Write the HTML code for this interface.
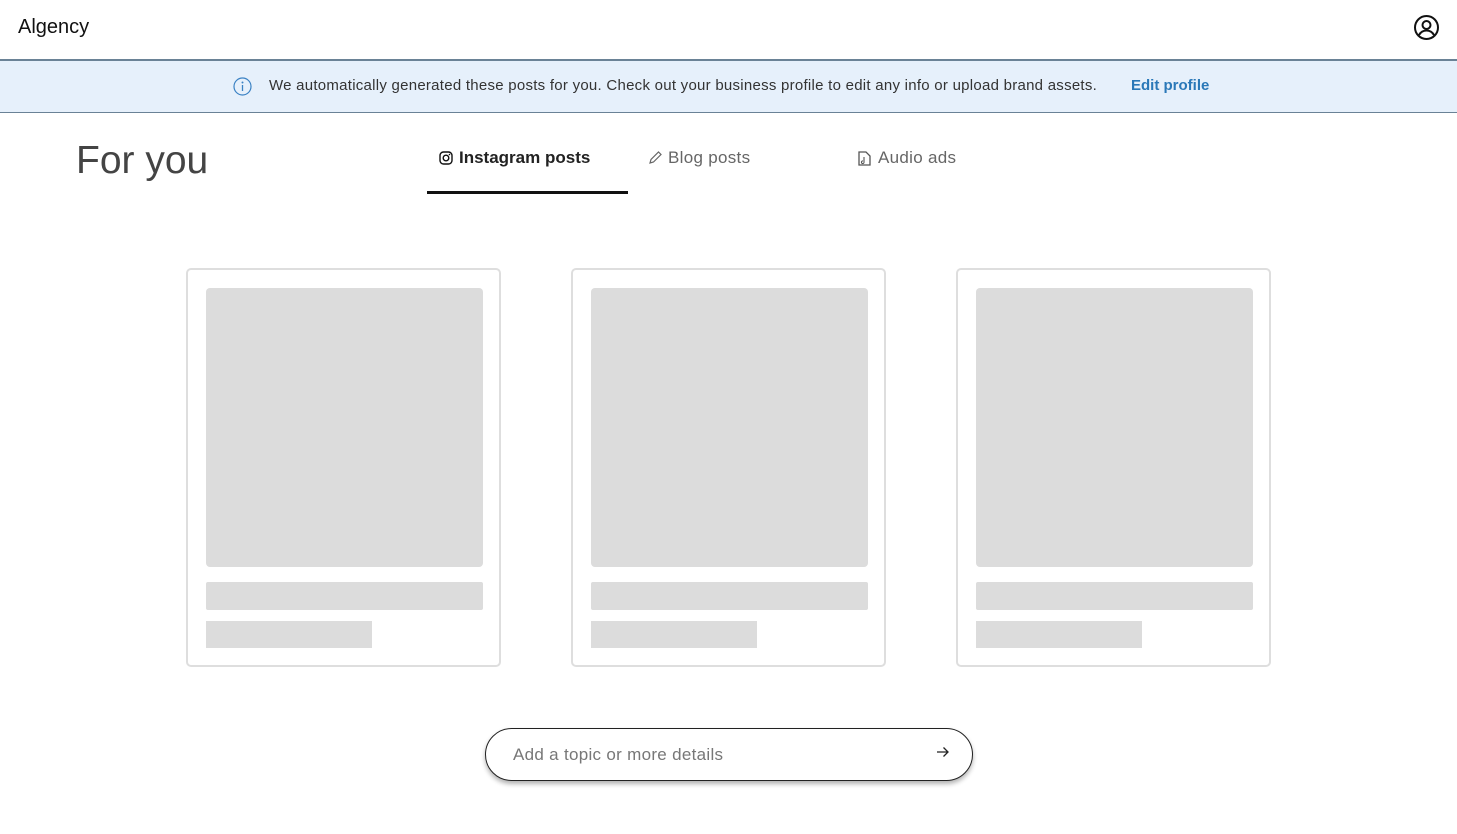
<!DOCTYPE html>
<html><head><meta charset="utf-8"><style>
*{box-sizing:border-box;margin:0;padding:0}
body{width:1457px;height:834px;background:#fff;font-family:"Liberation Sans",sans-serif;position:relative;overflow:hidden;color:#222}
.abs{position:absolute}
.card{position:absolute;top:268px;width:315px;height:399px;border:2px solid #dedede;border-radius:5px;background:#fff}
.img{position:absolute;left:18px;top:18px;width:277px;height:279px;background:#dcdcdc;border-radius:4px}
.b1{position:absolute;left:18px;top:312px;width:277px;height:28px;background:#dcdcdc;border-radius:2px}
.b2{position:absolute;left:18px;top:351px;width:166px;height:27px;background:#dcdcdc}
</style></head><body>
<div class="abs" style="left:18px;top:16px;font-size:20px;color:#111">Algency</div>
<svg class="abs" style="left:1413px;top:14px" width="27" height="27" viewBox="0 0 27 27"><circle cx="13.5" cy="13.5" r="11.5" fill="none" stroke="#111" stroke-width="2"/><circle cx="13.5" cy="11" r="4" fill="none" stroke="#111" stroke-width="2"/><path d="M6 21c2-3.5 4.5-4.5 7.5-4.5s5.5 1 7.5 4.5" fill="none" stroke="#111" stroke-width="2"/></svg>
<div class="abs" style="left:0;top:59px;width:1457px;height:54px;background:#e6f0fb;border-top:2px solid #6a8296;border-bottom:1px solid #6a8296"></div>
<svg class="abs" style="left:233px;top:77px" width="19" height="19" viewBox="0 0 19 19"><circle cx="9.5" cy="9.5" r="8.5" fill="none" stroke="#3b82c4" stroke-width="1.2"/><circle cx="9.5" cy="5.5" r="1" fill="#3b82c4"/><path d="M9.5 8v6" stroke="#3b82c4" stroke-width="1.3"/></svg>
<div class="abs" style="left:269px;top:77px;font-size:15px;color:#333;letter-spacing:0.26px;white-space:nowrap">We automatically generated these posts for you. Check out your business profile to edit any info or upload brand assets.</div>
<div class="abs" style="left:1131px;top:77px;font-size:15px;color:#2a78b8;font-weight:bold">Edit profile</div>
<div class="abs" style="left:76px;top:139px;font-size:39px;color:#444">For you</div>
<svg class="abs" style="left:439px;top:151px" width="14" height="14" viewBox="0 0 14 14"><rect x="1" y="1" width="12" height="12" rx="3.5" fill="none" stroke="#111" stroke-width="1.4"/><circle cx="7" cy="7" r="2.8" fill="none" stroke="#111" stroke-width="1.4"/><circle cx="10.5" cy="3.5" r=".8" fill="#111"/></svg>
<div class="abs" style="left:459px;top:148px;font-size:17px;font-weight:bold;color:#222">Instagram posts</div>
<div class="abs" style="left:427px;top:191px;width:201px;height:3px;background:#111"></div>
<svg class="abs" style="left:648px;top:150px" width="15" height="15" viewBox="0 0 15 15"><path d="M2 13l1-3.5L10.5 2l2.5 2.5L5.5 12z" fill="none" stroke="#666" stroke-width="1.2"/></svg>
<div class="abs" style="left:668px;top:148px;font-size:17px;color:#666;letter-spacing:0.3px">Blog posts</div>
<svg class="abs" style="left:858px;top:151px" width="13" height="15" viewBox="0 0 13 15"><path d="M1 1h7l4 4v9H1z" fill="none" stroke="#555" stroke-width="1.3"/><path d="M6 6v5M6 11a1.3 1.3 0 1 1-1-1" fill="none" stroke="#555" stroke-width="1.1"/></svg>
<div class="abs" style="left:878px;top:148px;font-size:17px;color:#666;letter-spacing:0.3px">Audio ads</div>
<div class="card" style="left:186px"><div class="img"></div><div class="b1"></div><div class="b2"></div></div>
<div class="card" style="left:571px"><div class="img"></div><div class="b1"></div><div class="b2"></div></div>
<div class="card" style="left:956px"><div class="img"></div><div class="b1"></div><div class="b2"></div></div>
<div class="abs" style="left:485px;top:728px;width:488px;height:53px;border:1.5px solid #222;border-radius:27px;box-shadow:0 3px 5px rgba(0,0,0,.3);background:#fff"></div>
<div class="abs" style="left:513px;top:745px;font-size:17px;color:#777;letter-spacing:0.3px">Add a topic or more details</div>
<svg class="abs" style="left:936px;top:746px" width="14" height="12" viewBox="0 0 14 12"><path d="M1 6h11M7.5 1.5L12 6l-4.5 4.5" fill="none" stroke="#222" stroke-width="1.3"/></svg>
</body></html>
